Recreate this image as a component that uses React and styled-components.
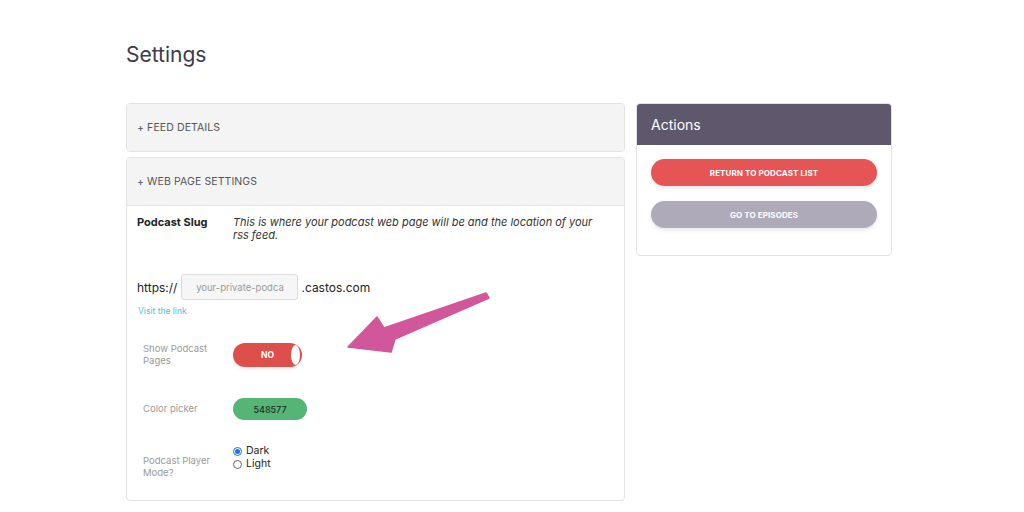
import React from "react";
import styled, { createGlobalStyle } from "styled-components";

const Global = createGlobalStyle`
  body {
    margin: 0;
    background: #fff;
    font-family: "Inter", "Noto Sans", sans-serif;
  }
`;

const Page = styled.div`
  position: relative;
  width: 1024px;
  height: 512px;
  overflow: hidden;
  padding: 40px 0 0 126px;
  box-sizing: border-box;
`;

const Title = styled.h1`
  margin: 0 0 33px;
  font-size: 21px;
  font-weight: 400;
  color: #3b3a4a;
  line-height: 30px;
`;

const Columns = styled.div`
  display: flex;
  gap: 11px;
  align-items: flex-start;
`;

const Left = styled.div`
  width: 499px;
  display: flex;
  flex-direction: column;
  gap: 5px;
`;

const Panel = styled.div`
  border: 1px solid #e3e3e3;
  border-radius: 4px;
  background: #fff;
  overflow: hidden;
`;

const PanelHead = styled.div`
  height: 47px;
  display: flex;
  align-items: center;
  padding-left: 10px;
  background: #f4f4f4;
  font-size: 10.5px;
  color: #555;
  letter-spacing: 0.1px;
`;

const PanelBody = styled.div`
  border-top: 1px solid #e6e6e6;
  padding: 10px 10px 30px;
  height: 254px;
`;

const SlugRow = styled.div`
  display: flex;
`;

const SlugLabel = styled.div`
  width: 96px;
  font-size: 11px;
  font-weight: 700;
  color: #222;
  line-height: 13px;
`;

const SlugDesc = styled.div`
  width: 378px;
  font-size: 11px;
  font-style: italic;
  color: #333;
  line-height: 13px;
`;

const UrlRow = styled.div`
  display: flex;
  align-items: center;
  margin-top: 32px;
  font-size: 12px;
  color: #222;
`;

const UrlInput = styled.div`
  margin: 0 3px 0 4px;
  width: 117px;
  height: 26px;
  box-sizing: border-box;
  border: 1px solid #dcdcdc;
  border-radius: 3px;
  background: #f6f6f6;
  color: #9a9a9a;
  font-size: 9.5px;
  display: flex;
  align-items: center;
  justify-content: center;
`;

const VisitLink = styled.a`
  display: block;
  margin-top: 6px;
  margin-left: 1px;
  font-size: 8.5px;
  color: #3fc6dc;
  text-decoration: none;
`;

const FieldRow = styled.div`
  display: grid;
  grid-template-columns: 90px auto;
  align-items: ${(p) => p.$align || "center"};
  margin: ${(p) => p.$margin || "0"};
  padding-left: 6px;
`;

const FieldLabel = styled.div`
  font-size: 9.5px;
  color: #9a9a9a;
  line-height: 12px;
  margin-top: ${(p) => p.$top || 0}px;
`;

const Toggle = styled.div`
  position: relative;
  width: 69px;
  height: 24px;
  border-radius: 12px;
  background: #dc4f4a;
  color: #fff;
  font-size: 8.5px;
  font-weight: 700;
  display: flex;
  align-items: center;
  justify-content: center;
  box-shadow: 0 2px 4px rgba(0, 0, 0, 0.08);
`;

const Knob = styled.span`
  position: absolute;
  right: 2px;
  top: 2px;
  width: 9px;
  height: 20px;
  border-radius: 50%;
  background: #fff;
`;

const ColorPill = styled.div`
  width: 74px;
  height: 22px;
  border-radius: 11px;
  background: #55b577;
  color: #1f2d25;
  font-size: 9px;
  font-weight: 500;
  display: flex;
  align-items: center;
  justify-content: center;
`;

const Radios = styled.div`
  display: flex;
  flex-direction: column;
  gap: 1px;
`;

const RadioLine = styled.label`
  display: flex;
  align-items: center;
  gap: 4px;
  font-size: 10.5px;
  color: #222;
  line-height: 12px;
`;

const Dot = styled.span`
  width: 7px;
  height: 7px;
  border-radius: 50%;
  border: 1px solid ${(p) => (p.$on ? "#1a73e8" : "#666")};
  background: #fff;
  display: inline-flex;
  align-items: center;
  justify-content: center;
  &::after {
    content: "";
    width: 5px;
    height: 5px;
    border-radius: 50%;
    background: ${(p) => (p.$on ? "#1a73e8" : "transparent")};
  }
`;

const Side = styled.div`
  width: 254px;
  border: 1px solid #e3e3e3;
  border-radius: 4px;
  overflow: hidden;
  background: #fff;
`;

const SideHead = styled.div`
  height: 41px;
  background: #5f586d;
  color: #fff;
  font-size: 14px;
  display: flex;
  align-items: center;
  padding-left: 14px;
`;

const SideBody = styled.div`
  padding: 14px 14px 27px;
  display: flex;
  flex-direction: column;
  gap: 15px;
`;

const ActionButton = styled.button`
  height: 27px;
  border: none;
  border-radius: 14px;
  background: ${(p) => p.$bg};
  color: #fff;
  font-family: inherit;
  font-size: 8px;
  font-weight: 700;
  letter-spacing: 0.1px;
  box-shadow: 0 2px 5px rgba(0, 0, 0, 0.1);
`;

const Arrow = styled.svg`
  position: absolute;
  left: 340px;
  top: 288px;
`;

export default function App() {
  return (
    <Page>
      <Global />
      <Title>Settings</Title>
      <Columns>
        <Left>
          <Panel>
            <PanelHead>+ FEED DETAILS</PanelHead>
          </Panel>
          <Panel>
            <PanelHead>+ WEB PAGE SETTINGS</PanelHead>
            <PanelBody>
              <SlugRow>
                <SlugLabel>Podcast Slug</SlugLabel>
                <SlugDesc>
                  This is where your podcast web page will be and the location of your rss feed.
                </SlugDesc>
              </SlugRow>
              <UrlRow>
                https://
                <UrlInput>your-private-podca</UrlInput>
                .castos.com
              </UrlRow>
              <VisitLink href="#">Visit the link</VisitLink>
              <FieldRow $margin="27px 0 0">
                <FieldLabel>
                  Show Podcast
                  <br />
                  Pages
                </FieldLabel>
                <Toggle>
                  NO
                  <Knob />
                </Toggle>
              </FieldRow>
              <FieldRow $margin="31px 0 0">
                <FieldLabel>Color picker</FieldLabel>
                <ColorPill>548577</ColorPill>
              </FieldRow>
              <FieldRow $margin="25px 0 0" $align="start">
                <FieldLabel $top={10}>
                  Podcast Player
                  <br />
                  Mode?
                </FieldLabel>
                <Radios>
                  <RadioLine>
                    <Dot $on /> Dark
                  </RadioLine>
                  <RadioLine>
                    <Dot /> Light
                  </RadioLine>
                </Radios>
              </FieldRow>
            </PanelBody>
          </Panel>
        </Left>
        <Side>
          <SideHead>Actions</SideHead>
          <SideBody>
            <ActionButton $bg="#e65556">RETURN TO PODCAST LIST</ActionButton>
            <ActionButton $bg="#aeaab9">GO TO EPISODES</ActionButton>
          </SideBody>
        </Side>
      </Columns>
      <Arrow width="160" height="72" viewBox="0 0 160 72">
        <path
          d="M146 5 L149 10 L55 51 L51 64 L8 59 L37 29 L44 40 Z"
          fill="#d2579a"
          stroke="#d2579a"
          strokeWidth="1.5"
          strokeLinejoin="round"
        />
      </Arrow>
    </Page>
  );
}
